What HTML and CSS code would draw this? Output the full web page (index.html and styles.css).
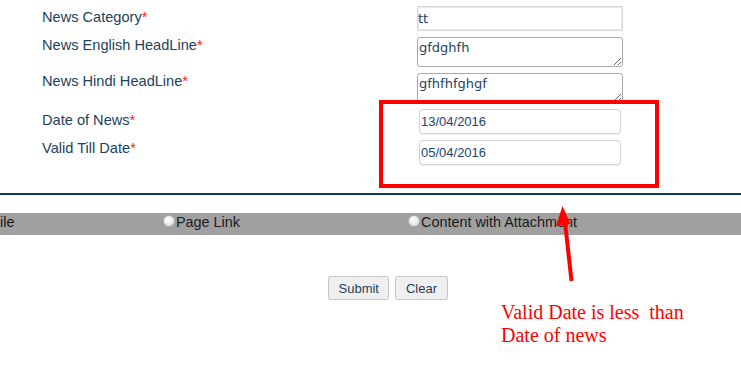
FILE: index.html
```html
<!doctype html>
<html>
<head>
<title>Add News</title>
<link rel="stylesheet" href="styles.css">
</head>
<body>
<div class="page">
  <div class="form">
    <div class="lbl drop">News Category<span class="req">*</span></div>
    <input class="txt" type="text" value="tt">

    <div class="lbl">News English HeadLine<span class="req">*</span></div>
    <textarea class="area">gfdghfh</textarea>

    <div class="lbl">News Hindi HeadLine<span class="req">*</span></div>
    <textarea class="area">gfhfhfghgf</textarea>

    <div class="lbl drop">Date of News<span class="req">*</span></div>
    <input class="date" type="text" value="13/04/2016">

    <div class="lbl">Valid Till Date<span class="req">*</span></div>
    <input class="date" type="text" value="05/04/2016">
  </div>

  <div class="rule"></div>

  <div class="typebar">
    <div class="opt">ile</div>
    <div class="opt"><span class="radio"></span>Page Link</div>
    <div class="opt"><span class="radio"></span>Content with Attachment</div>
  </div>

  <div class="actions">
    <button class="btn">Submit</button>
    <button class="btn">Clear</button>
  </div>

  <!-- review annotations drawn over the form -->
  <div class="mark"></div>
  <svg class="arrow" width="741" height="374" viewBox="0 0 741 374">
    <line x1="571.5" y1="281" x2="565" y2="222" stroke="#ff0000" stroke-width="4"/>
    <polygon points="562.5,206 556,226 570.5,224" fill="#ff0000"/>
  </svg>
  <div class="note">Valid Date is less&nbsp; than<br>Date of news</div>
</div>
</body>
</html>
```

FILE: styles.css
```css
body{
margin:0;
background:#fff;
font-family:"Liberation Sans",Arial,sans-serif;
font-size:14.6px;
color:#223f5c;
}
.page{
position:relative;
width:741px;
height:374px;
overflow:hidden;
}
.form{
display:grid;
grid-template-columns:375px 206px;
row-gap:6px;
padding:6px 0 0 42px;
align-items:start;
}
.lbl{
line-height:16px;
}
.lbl.drop{
padding-top:3px;
}
.req{
color:#ff2020;
}
.txt,.area,.date{
box-sizing:border-box;
margin:0;
outline:none;
color:#1e3f63;
}
.txt{
width:206px;
height:25px;
padding:0 1px 0 0;
border:1px solid #d6d6d6;
box-shadow:inset 0 0 0 1px #ececec;
font-family:"DejaVu Sans",Verdana,sans-serif;
font-size:13px;
}
.area{
display:block;
width:206px;
height:30px;
padding:2px 1px;
border:1px solid #a9a9a9;
border-radius:3px;
font-family:"DejaVu Sans",Verdana,sans-serif;
font-size:13px;
line-height:15px;
overflow:hidden;
}
.date{
width:202px;
height:25px;
margin-left:2px;
padding:0 1px;
border:1px solid #d3d3d3;
border-radius:4px;
box-shadow:0 1px 2px rgba(0,0,0,0.08);
font-family:"Liberation Sans",Arial,sans-serif;
font-size:13px;
color:#1c4470;
}
.rule{
margin-top:28px;
height:2px;
background:#0d3b5b;
}
.typebar{
margin-top:18px;
height:22px;
box-sizing:border-box;
padding-top:1px;
background:#a0a0a0;
display:grid;
grid-template-columns:163px 245px 1fr;
line-height:16px;
font-size:14.4px;
color:#1a1a22;
}
.opt{
display:flex;
align-items:flex-start;
white-space:nowrap;
}
.radio{
width:12px;
height:12px;
margin:1px 1px 0 0;
border-radius:50%;
box-sizing:border-box;
border:1px solid #b0b0b0;
background:radial-gradient(circle at 40% 35%,#ffffff,#d8d8d8);
}
.actions{
margin-top:41px;
padding-left:328px;
display:flex;
gap:6px;
}
.btn{
height:24px;
padding:0 9.5px;
border:1px solid #c6c6c6;
border-radius:3px;
background:#efefef;
font-family:"Liberation Sans",Arial,sans-serif;
font-size:13px;
color:#1f3d5a;
}
.mark{
position:absolute;
left:379px;
top:100px;
width:280px;
height:88px;
box-sizing:border-box;
border:4px solid #ff0000;
}
.arrow{
position:absolute;
left:0;
top:0;
}
.note{
position:absolute;
left:501px;
top:301px;
font-family:"Liberation Serif","Times New Roman",serif;
font-size:20px;
color:#ff0000;
white-space:nowrap;
}
```
